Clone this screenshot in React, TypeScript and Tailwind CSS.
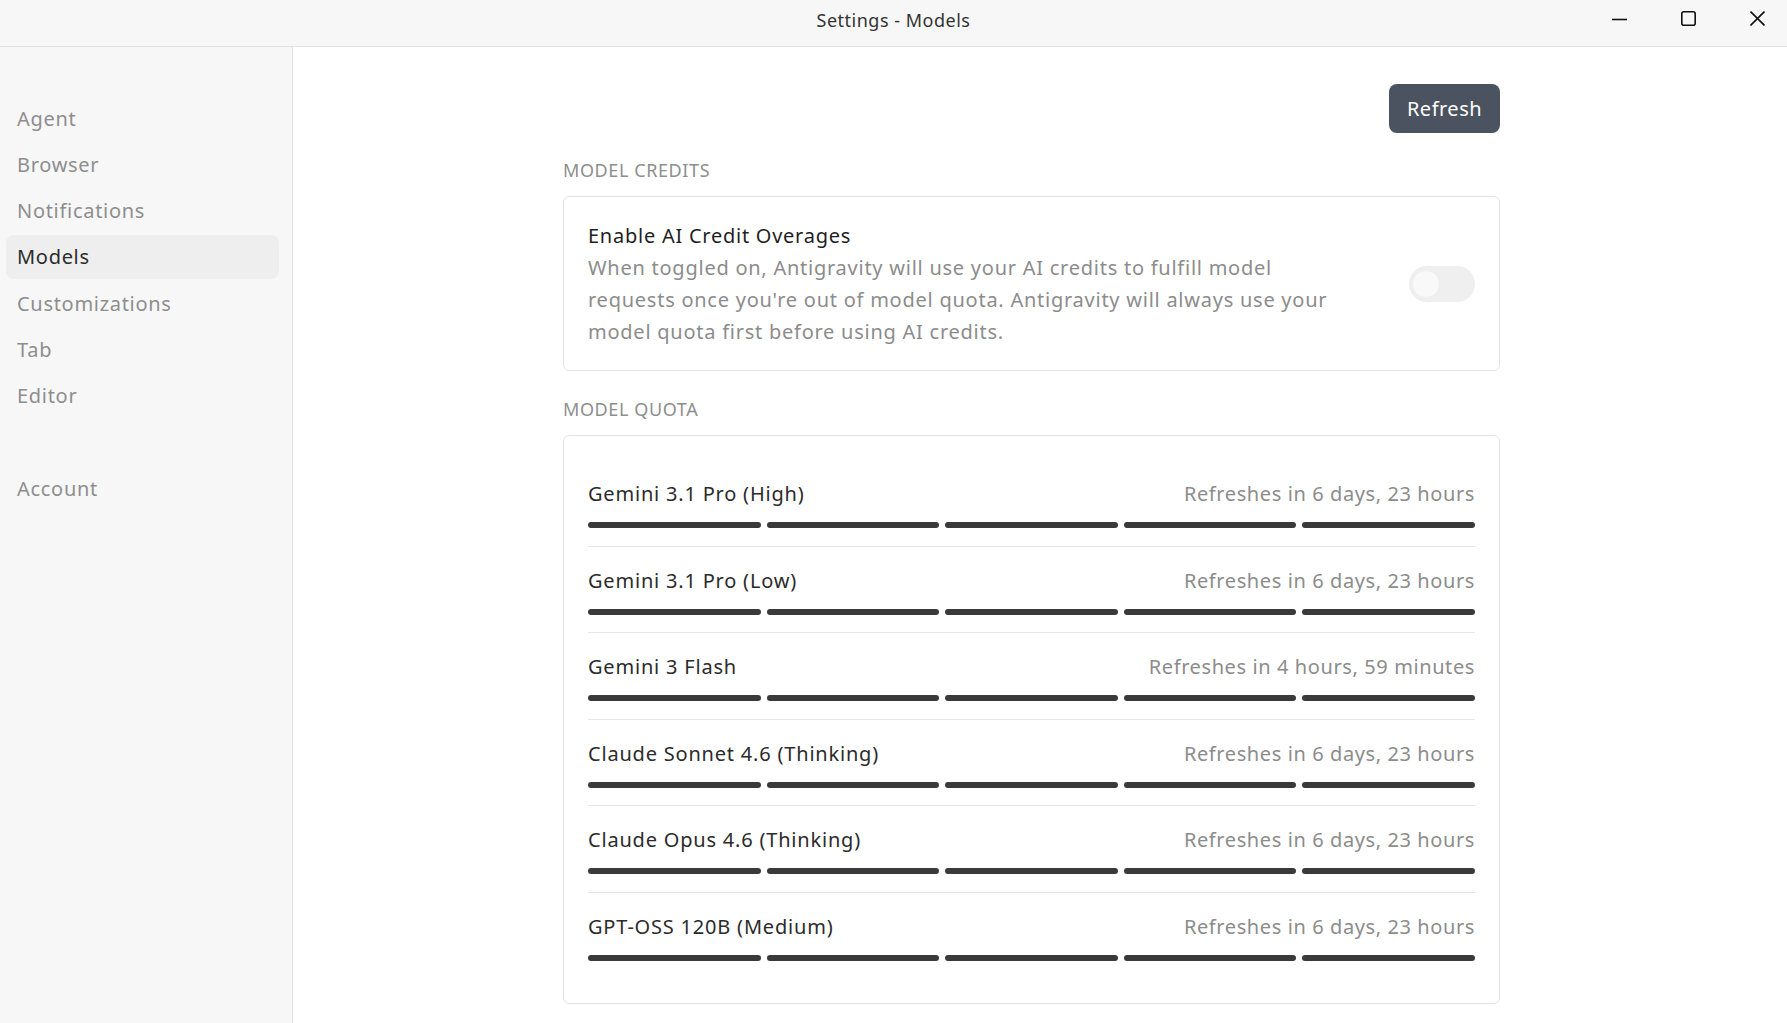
import React from "react";

const FONT = "font-['Noto_Sans',sans-serif]";

const navItems = ["Agent", "Browser", "Notifications", "Models", "Customizations", "Tab", "Editor"];

const models = [
  { name: "Gemini 3.1 Pro (High)", refresh: "Refreshes in 6 days, 23 hours" },
  { name: "Gemini 3.1 Pro (Low)", refresh: "Refreshes in 6 days, 23 hours" },
  { name: "Gemini 3 Flash", refresh: "Refreshes in 4 hours, 59 minutes" },
  { name: "Claude Sonnet 4.6 (Thinking)", refresh: "Refreshes in 6 days, 23 hours" },
  { name: "Claude Opus 4.6 (Thinking)", refresh: "Refreshes in 6 days, 23 hours" },
  { name: "GPT-OSS 120B (Medium)", refresh: "Refreshes in 6 days, 23 hours" },
];

const NavItem = ({ label, active }: { label: string; active?: boolean }) => (
  <div
    className={
      "h-[44px] flex items-center pl-[11px] rounded-[8px] text-[20px] tracking-[0.7px] " +
      (active ? "bg-[#eeeeee] text-[#2b2b2b]" : "text-[#8e8e8e]")
    }
  >
    {label}
  </div>
);

const QuotaRow = ({ name, refresh, last }: { name: string; refresh: string; last?: boolean }) => (
  <div className={"pt-[20px] pb-[17.6px] " + (last ? "" : "border-b border-[#e6e6e6]")}>
    <div className="flex justify-between items-center h-[28px] text-[20px]">
      <span className="text-[#2b2b2b] tracking-[0.8px]">{name}</span>
      <span className="text-[#8c8c8c] tracking-[0.6px]">{refresh}</span>
    </div>
    <div className="mt-[14px] flex gap-[6px]">
      {[0, 1, 2, 3, 4].map((i) => (
        <div key={i} className="flex-1 h-[6px] rounded-full bg-[#3a3a3a]" />
      ))}
    </div>
  </div>
);

export default function App() {
  return (
    <div className={"h-screen w-full flex flex-col overflow-hidden bg-white " + FONT}>
      {/* Title bar */}
      <div className="h-[47px] shrink-0 grid grid-cols-[1fr_auto_1fr] bg-[#f7f7f7] border-b border-[#e3e3e3]">
        <div />
        <div className="pt-[8px] text-[18px] leading-[24px] tracking-[0.5px] text-[#333333]">Settings - Models</div>
        <div className="flex justify-end mr-[-5px]">
          <div className="w-[69px] h-[36px] flex items-center justify-center">
            <svg width="15" height="15" viewBox="0 0 15 15">
              <path d="M0 8.5h15" stroke="#111" strokeWidth="1.6" />
            </svg>
          </div>
          <div className="w-[69px] h-[36px] flex items-center justify-center">
            <svg width="15" height="15" viewBox="0 0 15 15">
              <rect x="0.8" y="0.8" width="13.4" height="13.4" rx="2" fill="none" stroke="#111" strokeWidth="1.6" />
            </svg>
          </div>
          <div className="w-[69px] h-[36px] flex items-center justify-center">
            <svg width="15" height="15" viewBox="0 0 15 15">
              <path d="M0.5 0.5L14.5 14.5M14.5 0.5L0.5 14.5" stroke="#111" strokeWidth="1.6" />
            </svg>
          </div>
        </div>
      </div>

      <div className="flex flex-1 min-h-0">
        {/* Sidebar */}
        <aside className="w-[293px] shrink-0 bg-[#f7f7f7] border-r border-[#e3e3e3] pt-[49.5px] pl-[6px] pr-[13px] flex flex-col gap-[2.3px]">
          {navItems.map((item) => (
            <NavItem key={item} label={item} active={item === "Models"} />
          ))}
          <div className="h-[44px]" />
          <NavItem label="Account" />
        </aside>

        {/* Content */}
        <main className="flex-1 overflow-hidden pr-[17px]">
          <div className="w-[937px] mx-auto pt-[37px]">
            <div className="flex justify-end">
              <button className="h-[49px] w-[111px] rounded-[8px] bg-[#4b5360] text-white text-[20px] tracking-[0.5px] pt-[1px]">
                Refresh
              </button>
            </div>

            <div className="mt-[25px] mb-[14px] text-[18px] leading-[24px] tracking-[0.6px] text-[#8e8e8e]">MODEL CREDITS</div>
            <div className="border border-[#e4e4e4] rounded-[6px] px-6 pt-[23px] pb-[22px] flex items-center justify-between">
              <div className="w-[775px] text-[20px] leading-[32px] tracking-[0.75px]">
                <div className="text-[#1f1f1f]">Enable AI Credit Overages</div>
                <div className="text-[#8c8c8c]">
                  When toggled on, Antigravity will use your AI credits to fulfill model requests once you're out of model
                  quota. Antigravity will always use your model quota first before using AI credits.
                </div>
              </div>
              <div className="w-[66px] h-[36px] rounded-full bg-[#efefef] flex items-center pl-[4px]">
                <div className="w-[26px] h-[26px] rounded-full bg-[#f9f9f9]" />
              </div>
            </div>

            <div className="mt-[26px] mb-[14px] text-[18px] leading-[24px] tracking-[0.6px] text-[#8e8e8e]">MODEL QUOTA</div>
            <div className="border border-[#e4e4e4] rounded-[6px] px-6 py-6">
              {models.map((m, i) => (
                <QuotaRow key={m.name} name={m.name} refresh={m.refresh} last={i === models.length - 1} />
              ))}
            </div>
          </div>
        </main>
      </div>
    </div>
  );
}
